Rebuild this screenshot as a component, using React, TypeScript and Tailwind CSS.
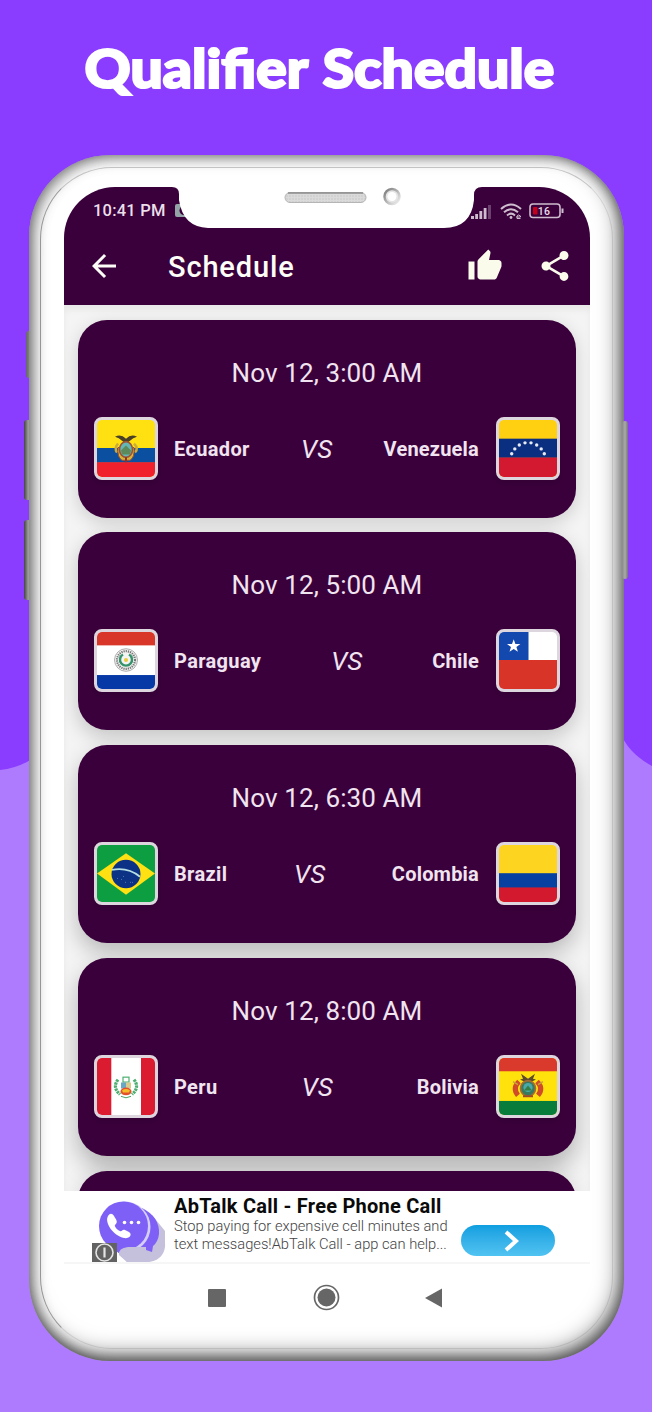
import type { ReactNode } from "react";

type Country =
  | "Ecuador"
  | "Venezuela"
  | "Paraguay"
  | "Chile"
  | "Brazil"
  | "Colombia"
  | "Peru"
  | "Bolivia";

const flags: Record<Country, ReactNode> = {
  Ecuador: (
    <>
      <rect width="58" height="58" fill="#ffe011" />
      <rect y="28.5" width="58" height="15" fill="#0b50a0" />
      <rect y="43" width="58" height="15" fill="#f0202c" />
      <path d="M21 24q-4 5-1 9M37 24q5 5 1 9" stroke="#c9ad3c" strokeWidth="2.5" fill="none" />
      <path d="M18 17q6-3 11 2 5-5 11-2-4 1-7 4l-4 3-4-3q-3-3-7-4z" fill="#4a4026" />
      <path d="M21 28q-1 10 4 13h8q5-3 4-13z" fill="#d8b634" stroke="#a34a32" strokeWidth="1" />
      <ellipse cx="29" cy="30" rx="6.5" ry="8" fill="#63b7b4" stroke="#9c5238" strokeWidth="1.6" />
      <path d="M24 31l5-5 5 5-1 4h-8z" fill="#5d8a5a" />
      <path d="M29 38v5" stroke="#8c332e" strokeWidth="2" />
    </>
  ),
  Venezuela: (
    <>
      <rect width="58" height="58" fill="#ffcf12" />
      <rect y="19" width="58" height="19.5" fill="#0b2f80" />
      <rect y="38.2" width="58" height="20" fill="#d3192f" />
      <g fill="#e6eaf3">
        <circle cx="12.7" cy="34.3" r="1.7" />
        <circle cx="15.8" cy="29.4" r="1.7" />
        <circle cx="20.3" cy="25.4" r="1.7" />
        <circle cx="26" cy="23.2" r="1.7" />
        <circle cx="32" cy="23.2" r="1.7" />
        <circle cx="37.7" cy="25.4" r="1.7" />
        <circle cx="42.2" cy="29.4" r="1.7" />
        <circle cx="45.3" cy="34.3" r="1.7" />
      </g>
    </>
  ),
  Paraguay: (
    <>
      <rect width="58" height="58" fill="#fff" />
      <rect width="58" height="13.6" fill="#d83629" />
      <rect y="43.8" width="58" height="14.2" fill="#0639a6" />
      <circle cx="29" cy="28.5" r="11.5" fill="#f3f3f3" stroke="#9a9a9a" strokeWidth="0.8" />
      <circle cx="29" cy="28.5" r="9" fill="none" stroke="#777" strokeWidth="2.2" strokeDasharray="1.3 0.9" />
      <path d="M26 23a6 6 0 1 0 6 0" fill="none" stroke="#35936b" strokeWidth="2.4" />
      <circle cx="29" cy="28.5" r="2" fill="#e8ca3d" />
    </>
  ),
  Chile: (
    <>
      <rect width="58" height="29" fill="#fff" />
      <rect width="29.5" height="29" fill="#1348ae" />
      <rect y="28.5" width="58" height="29.5" fill="#d93428" />
      <path d="M14.7 7.5l1.7 4.8h5l-4 3 1.5 4.9-4.2-3-4.2 3 1.5-4.9-4-3h5z" fill="#fff" />
    </>
  ),
  Brazil: (
    <>
      <rect width="58" height="58" fill="#0d9e42" />
      <path d="M0 29L29 8.5 58 29 29 50.5z" fill="#ffe012" />
      <circle cx="29" cy="29.5" r="14.5" fill="#0b3285" />
      <path d="M15 25.3q16-3 28 7" fill="none" stroke="#b5dfe2" strokeWidth="1.8" />
      <path d="M20 34h1m3 1h1m3 3h1m4 0h1m-8-6h1m8 6h1" stroke="#5675ae" strokeWidth="1" />
    </>
  ),
  Colombia: (
    <>
      <rect width="58" height="58" fill="#fdd420" />
      <rect y="28.7" width="58" height="15" fill="#0640a0" />
      <rect y="43.2" width="58" height="15" fill="#d3192d" />
    </>
  ),
  Peru: (
    <>
      <rect width="58" height="58" fill="#fff" />
      <rect width="14.3" height="58" fill="#db1c30" />
      <rect x="44" width="14" height="58" fill="#db1c30" />
      <path d="M21 22q-6 8 2 15M37 22q6 8-2 15" fill="none" stroke="#4eae70" strokeWidth="3.2" strokeDasharray="2.5 0.7" />
      <rect x="26" y="19.5" width="6" height="5" fill="#fff" stroke="#4eae70" strokeWidth="1.2" />
      <path d="M24 25h5v6h-5z" fill="#6aa6c5" />
      <path d="M29 25h5v6h-5z" fill="#d9ca8d" />
      <ellipse cx="29" cy="34" rx="5.5" ry="4" fill="#e3512a" />
      <path d="M25 33q4-3 8 0l-1 2h-6z" fill="#f4be28" />
      <path d="M24 39l5 1.5 5-1.5" fill="none" stroke="#4b9f65" strokeWidth="1" />
    </>
  ),
  Bolivia: (
    <>
      <rect width="58" height="58" fill="#ffe20c" />
      <rect width="58" height="13.5" fill="#d93a2b" />
      <rect y="43.7" width="58" height="14.3" fill="#087c3b" />
      <path d="M22 16l7 5 7-5-2 5 3 1-8 4-8-4 3-1z" fill="#5b4a2c" />
      <path d="M20 24q-7 7-1 14M38 24q7 7 1 14" fill="none" stroke="#cf4b29" strokeWidth="5" />
      <path d="M14 24l5 3M44 24l-5 3" stroke="#c9a437" strokeWidth="1.5" />
      <ellipse cx="29" cy="31" rx="7.5" ry="8" fill="#39795c" stroke="#a86b32" strokeWidth="1.6" />
      <circle cx="29" cy="30" r="4.6" fill="#4ba9a7" />
      <path d="M25 33l4-5 4 5z" fill="#337c42" />
      <path d="M24 39h10" stroke="#9e4b2c" strokeWidth="2" />
    </>
  ),
};

function Flag({ country }: { country: Country }) {
  return (
    <div className="h-[63px] w-16 shrink-0 overflow-hidden rounded-[8px] border-[3px] border-[#ded6de] bg-[#ded6de] shadow-[0_3px_6px_rgba(0,0,0,0.12)]">
      <svg viewBox="0 0 58 58" preserveAspectRatio="none" className="block h-full w-full rounded-[4px]">
        {flags[country]}
      </svg>
    </div>
  );
}

interface Match {
  time: string;
  home: Country;
  away: Country;
  shadow: string;
}

const matches: Match[] = [
  { time: "Nov 12, 3:00 AM", home: "Ecuador", away: "Venezuela", shadow: "shadow-[0_5px_18px_rgba(0,0,0,0.16)]" },
  { time: "Nov 12, 5:00 AM", home: "Paraguay", away: "Chile", shadow: "shadow-[0_7px_20px_rgba(0,0,0,0.2)]" },
  { time: "Nov 12, 6:30 AM", home: "Brazil", away: "Colombia", shadow: "shadow-[0_10px_22px_rgba(0,0,0,0.24)]" },
  { time: "Nov 12, 8:00 AM", home: "Peru", away: "Bolivia", shadow: "shadow-[0_12px_24px_rgba(0,0,0,0.27)]" },
];

function MatchCard({ match }: { match: Match }) {
  return (
    <article className={`flex h-[198px] shrink-0 flex-col rounded-[29px] bg-[#3a003b] px-4 pt-[35px] text-[#f1e4f1] ${match.shadow}`}>
      <p className="text-center text-[26px] leading-[36px] tracking-[0.1px]">{match.time}</p>
      <div className="mt-[26px] flex items-center">
        <Flag country={match.home} />
        <span className="ml-4 pt-px text-[20px] font-bold tracking-[0.35px]">{match.home}</span>
        <span className="flex-1 pt-0.5 text-center text-[26px] italic">VS</span>
        <span className="mr-[17px] pt-px text-[20px] font-bold tracking-[0.2px]">{match.away}</span>
        <Flag country={match.away} />
      </div>
    </article>
  );
}

function StatusBar() {
  return (
    <div className="flex h-[41px] items-center pl-[29px] pr-[26px] pt-[7px] text-[#eadfea]">
      <span className="text-[16.5px] font-medium tracking-[0.2px]">10:41 PM</span>
      <svg width="18" height="14" viewBox="0 0 18 14" className="ml-[9px]">
        <rect width="18" height="13" rx="2" fill="#94a5a8" />
        <circle cx="9" cy="6.5" r="4.5" fill="#3a003b" />
      </svg>
      <div className="ml-auto flex items-center">
        <svg width="21" height="15" viewBox="0 0 21 15" fill="#cdbccd">
          <rect x="0" y="12" width="3" height="3" />
          <rect x="4.2" y="10" width="2.8" height="5" />
          <rect x="8.4" y="7" width="2.8" height="8" />
          <rect x="12.7" y="4" width="2.8" height="11" />
          <rect x="17" y="1" width="3" height="14" fill="#6c416d" />
        </svg>
        <svg width="22" height="17" viewBox="0 0 22 17" fill="none" stroke="#cdbccd" strokeWidth="2" className="ml-[8px]">
          <path d="M1 6Q11-3 21 6M4 9.3q7-6 14 0M7 12.4q4-3.5 8 0" />
          <circle cx="11" cy="14.5" r="1.4" fill="#cdbccd" stroke="none" />
          <path d="M16.500 14h4v-1q-2-2-3.500 0v2.500h3.500" strokeWidth="1" />
        </svg>
        <svg width="35" height="16" viewBox="0 0 35 16" className="ml-[7px]">
          <rect x="1" y="1" width="30" height="13.5" rx="3" fill="none" stroke="#cdbccd" strokeWidth="1.6" />
          <rect x="4" y="4" width="4.5" height="7.5" rx="1" fill="#c1001b" />
          <path d="M32.5 5.5h2v4.5h-2z" fill="#cdbccd" />
          <text x="8.7" y="11.6" fill="#eadfea" fontSize="10.5" fontWeight="500" letterSpacing="0.4" fontFamily="Roboto, sans-serif">16</text>
        </svg>
      </div>
    </div>
  );
}

function AppBar() {
  return (
    <div className="flex h-[77px] items-center pb-[2px] pl-[22px] pr-[17px] text-[#fffdf8]">
      <svg width="36" height="36" viewBox="0 0 24 24" fill="currentColor">
        <path d="M20 11H7.83l5.59-5.59L12 4l-8 8 8 8 1.41-1.41L7.83 13H20v-2z" />
      </svg>
      <h2 className="ml-[46px] pt-[3px] text-[29px] font-medium leading-none tracking-[0.85px]">Schedule</h2>
      <svg width="36" height="36" viewBox="0 0 24 24" fill="#fafbeb" className="ml-auto">
        <path d="M1 21h4V9H1v12zm22-11c0-1.1-.9-2-2-2h-6.31l.95-4.57.03-.32c0-.41-.17-.79-.44-1.06L14.17 1 7.59 7.59C7.22 7.95 7 8.45 7 9v10c0 1.1.9 2 2 2h9c.83 0 1.54-.5 1.84-1.22l3.02-7.05c.09-.23.14-.47.14-.73v-2z" />
      </svg>
      <svg width="36" height="36" viewBox="0 0 24 24" fill="#fafbeb" className="ml-[34px]">
        <path d="M18 16.08c-.76 0-1.44.3-1.96.77L8.91 12.7c.05-.23.09-.46.09-.7s-.04-.47-.09-.7l7.05-4.11c.54.5 1.25.81 2.04.81 1.66 0 3-1.34 3-3s-1.34-3-3-3-3 1.34-3 3c0 .24.04.47.09.7L8.04 9.81C7.5 9.31 6.79 9 6 9c-1.66 0-3 1.34-3 3s1.34 3 3 3c.79 0 1.5-.31 2.04-.81l7.12 4.16c-.05.21-.08.43-.08.65 0 1.61 1.31 2.92 2.92 2.92s2.92-1.31 2.92-2.92-1.31-2.92-2.92-2.92z" />
      </svg>
    </div>
  );
}

function AdBanner() {
  return (
    <div className="relative flex h-[73px] border-b-2 border-[#f6f6f6] bg-white pl-7">
      <svg width="74" height="71" viewBox="0 0 74 71" className="shrink-0">
        <path d="M26 61l9 10h20c13 0 19-10 18-19V40L60 24z" fill="#c5c0dc" />
        <path d="M50 17Q68 26 67 43 66 51 61 55l-1 6-12-4z" fill="#7e60f7" />
        <circle cx="33" cy="36" r="25.500" fill="#d5cffa" />
        <circle cx="31.500" cy="35" r="24.500" fill="#7e60f7" />
        <path d="M16 54l12 9 8-6z" fill="#7e60f7" />
        <path d="M27 64q-1-7 9-8h18v4l7 3-8 8H35z" fill="#c5c0dc" />
        <path d="M16 25c-4 7 6 20 16 22 5 1 9-3 5-6l-4-2c-3-1-3 2-5 1-3-1-6-5-5-6 3-3 2-4-1-9-2-3-4-3-6 0z" fill="#fff" />
        <g fill="#fff">
          <circle cx="32.500" cy="31.500" r="1.800" />
          <circle cx="39.500" cy="31.500" r="1.800" />
          <circle cx="46.500" cy="31.500" r="1.800" />
        </g>
        <rect y="52" width="25" height="19" fill="#626262" />
        <circle cx="12.500" cy="61.500" r="8.500" fill="none" stroke="#e4e4e4" strokeWidth="1.600" />
        <path d="M12.500 56.500v10" stroke="#e4e4e4" strokeWidth="2.200" />
      </svg>
      <div className="ml-2 w-[280px] shrink-0 whitespace-nowrap pt-[3px]">
        <h3 className="text-[20px] font-bold leading-6 tracking-[0.24px] text-[#0a0a0a]">AbTalk Call - Free Phone Call</h3>
        <p className="text-[14.700px] font-light leading-[17.500px] text-[#444]">
          Stop paying for expensive cell minutes and
          <br />
          text messages!AbTalk Call - app can help...
        </p>
      </div>
      <button className="ml-[7px] mt-[34px] flex h-[31px] w-[94px] items-center justify-center rounded-full bg-linear-to-b from-[#0c9fe0] to-[#50c3f1]">
        <svg width="18" height="22" viewBox="0 0 18 22" className="ml-[8px]" fill="none" stroke="#fff" strokeWidth="4">
          <path d="M3 2l10 9-10 9" />
        </svg>
      </button>
    </div>
  );
}

function NavBar() {
  return (
    <div className="flex h-[67px] items-center text-[#666]">
      <div className="ml-[144px] size-[18px] rounded-[1px] bg-[#666]" />
      <svg width="27" height="27" viewBox="0 0 27 27" className="ml-[87px]" fill="#666">
        <circle cx="13.500" cy="13.500" r="12" fill="none" stroke="#666" strokeWidth="1.700" />
        <circle cx="13.500" cy="13.500" r="9" />
      </svg>
      <svg width="18" height="20" viewBox="0 0 18 20" className="ml-[85px]" fill="#666">
        <path d="M0 10L17 .5v19z" />
      </svg>
    </div>
  );
}

function Notch() {
  return (
    <svg width="310" height="43" viewBox="0 0 310 43" className="absolute left-[108px] top-[-1px]">
      <defs>
        <pattern id="grille" width="3" height="3" patternUnits="userSpaceOnUse">
          <rect width="3" height="3" fill="#dadada" />
          <circle cx="1" cy="1" r="0.700" fill="#c2c2c2" />
        </pattern>
        <linearGradient id="rim" x1="0" y1="0" x2="1" y2="1">
          <stop offset="0" stopColor="#777" />
          <stop offset="1" stopColor="#f5f5f5" />
        </linearGradient>
      </defs>
      <path d="M0 0H310V1Q302 1 302 9V14Q299 42 272 42H36Q11 41 7 14V8Q7 1 0 1z" fill="#fff" />
      <rect x="113" y="6.500" width="81" height="10" rx="5" fill="url(#grille)" stroke="#b5b5b5" strokeWidth="1" />
      <path d="M116 7h75" stroke="#8d8d8d" strokeWidth="1.500" />
      <circle cx="220" cy="10.500" r="7.500" fill="#e5e5e5" stroke="url(#rim)" strokeWidth="2.500" />
      <circle cx="220" cy="10.500" r="4.500" fill="#fff" />
    </svg>
  );
}

function Phone() {
  return (
    <div className="relative z-10 ml-[29px] h-[1206px] w-[595px] rounded-[81px] bg-white pl-[35px] pr-[34px] pt-8 shadow-[inset_-5px_-7px_22px_rgba(0,0,0,0.5),inset_-3px_-4px_12px_rgba(0,0,0,0.3),inset_5px_3px_14px_rgba(0,0,0,0.36)]">
      <div className="pointer-events-none absolute inset-x-[11px] inset-y-3 rounded-[72px] border border-b-black/10 border-l-black/35 border-r-black/10 border-t-black/20" />
      <div className="relative">
        <div className="flex h-[1077px] flex-col overflow-hidden rounded-t-[51px] bg-[#f3f3f3] font-['Roboto',sans-serif]">
          <header className="h-[118px] shrink-0 bg-[#3a003b]">
            <StatusBar />
            <AppBar />
          </header>
          <main className="flex min-h-0 flex-1 flex-col gap-[14.800px] overflow-hidden bg-[#f4f4f4] px-[14px] pt-[14.500px] shadow-[inset_0_5px_6px_rgba(0,0,0,0.05)]">
            {matches.map((match) => (
              <MatchCard key={match.time} match={match} />
            ))}
            <div className="h-[198px] shrink-0 rounded-[29px] bg-[#3a003b] shadow-[0_0_20px_rgba(0,0,0,0.12)]" />
          </main>
          <AdBanner />
        </div>
        <Notch />
        <NavBar />
      </div>
    </div>
  );
}

export default function App() {
  return (
    <div className="relative h-[1412px] w-[652px] overflow-hidden bg-[#8b3dff]">
      <svg width="652" height="700" viewBox="0 0 652 700" className="absolute bottom-0 left-0">
        <path d="M0 58Q18 56 32 47L620 20Q628 41 652 54V700H0z" fill="#ae7bff" />
      </svg>
      <div className="flex h-[155px] justify-center pr-[14px] pt-[30px]">
        <h1 className="scale-x-[1.075] whitespace-nowrap font-['Lato',sans-serif] text-[53px] font-black leading-[76px] text-white [-webkit-text-stroke:2.2px_white] [word-spacing:2px]">
          Qualifier Schedule
        </h1>
      </div>
      <div className="absolute left-[26px] top-[331px] h-[47px] w-2 rounded-l-[3px] bg-linear-to-r from-[#666] to-[#aaa]" />
      <div className="absolute left-6 top-[420px] h-20 w-2 rounded-l-[3px] bg-linear-to-r from-[#444] via-[#999] to-[#aaa]" />
      <div className="absolute left-6 top-[520px] h-20 w-2 rounded-l-[3px] bg-linear-to-r from-[#444] via-[#999] to-[#aaa]" />
      <div className="absolute left-[622px] top-[421px] z-20 h-[158px] w-[6px] rounded-[3px] bg-linear-to-r from-[#888] via-[#aaa] to-[#777]" />
      <Phone />
    </div>
  );
}
